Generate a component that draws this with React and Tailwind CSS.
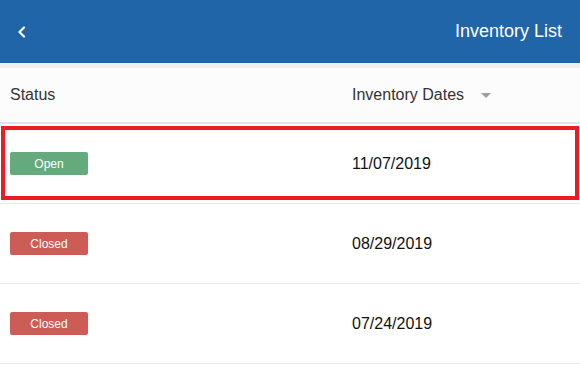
import React from 'react';

const rows = [
  { status: 'Open', date: '11/07/2019', selected: true },
  { status: 'Closed', date: '08/29/2019' },
  { status: 'Closed', date: '07/24/2019' },
];

function Badge({ status }) {
  const color = status === 'Open' ? 'bg-[#65aa7d]' : 'bg-[#cc5c55]';
  return (
    <span className={`flex h-[23px] w-[78px] items-center justify-center rounded-[2px] text-[12px] text-white ${color}`}>
      {status}
    </span>
  );
}

export default function App() {
  return (
    <div className="h-[369px] w-[580px] overflow-hidden bg-white font-['Liberation_Sans',Arial,sans-serif]">
      {/* top bar */}
      <div className="flex h-[63px] items-center justify-between bg-[#2165a9] pl-[17px] pr-[18px]">
        <svg width="10" height="12" viewBox="0 0 10 12" className="mt-[1px]">
          <polyline points="7,1.5 2.5,6 7,10.5" fill="none" stroke="white" strokeWidth="2.2" strokeLinecap="round" strokeLinejoin="round" />
        </svg>
        <span className="text-[18px] text-white">Inventory List</span>
      </div>
      <div className="h-[5px] bg-[#efefef]" />

      {/* column headings */}
      <div className="grid h-[56px] grid-cols-[352px_1fr] items-center border-b-2 border-[#e3e3e3] bg-[#fcfcfc] text-[16px] text-[#333]">
        <span className="pl-[10px]">Status</span>
        <div className="flex items-center">
          <span>Inventory Dates</span>
          <svg width="10" height="6" viewBox="0 0 10 6" className="ml-[17px] mt-[1px]">
            <polygon points="0,0 10,0 5,5" fill="#9e9e9e" />
          </svg>
        </div>
      </div>

      {/* rows */}
      {rows.map((r) => (
        <div key={r.date} className="relative grid h-[80px] grid-cols-[352px_1fr] items-center border-b border-[#ececec] text-[16px] text-[#111]">
          <div className="pl-[10px]">
            <Badge status={r.status} />
          </div>
          <span>{r.date}</span>
          {r.selected && (
            <div className="absolute left-[1px] right-[1px] top-[2px] bottom-[3px] border-4 border-[#ed1c24]" />
          )}
        </div>
      ))}
    </div>
  );
}
